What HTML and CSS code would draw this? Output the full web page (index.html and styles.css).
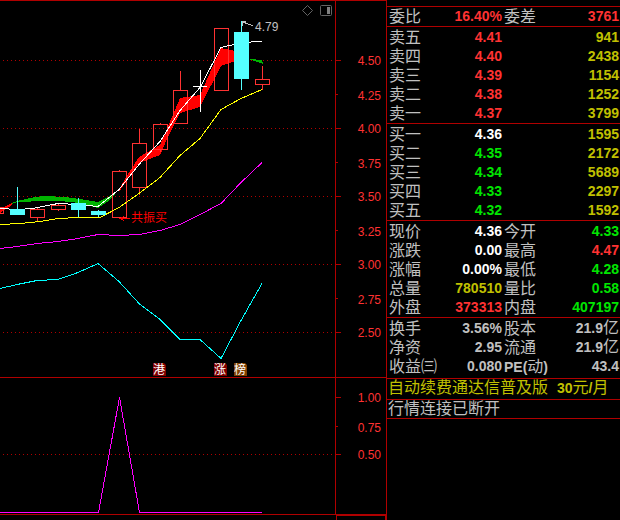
FILE: index.html
```
<!DOCTYPE html>
<html lang="zh-CN">
<head>
    <meta charset="UTF-8">
    <meta name="viewport" content="width=device-width, initial-scale=1.0">
    <title>行情</title>
    <link rel="stylesheet" href="styles.css">
</head>
<body>
    <main class="charts">
        <!-- K线 -->
        <svg class="chart main-chart" viewBox="0 0 386 377" role="img" aria-label="K线图">
            <g class="grid">
                <path d="M3 60.5H334M3 128.5H334M3 196.5H334M3 264.5H334M3 332.5H334"/>
            </g>
            <g class="axis">
                <path d="M335.5 0V377M336 60.5h5M336 94.5h2M336 128.5h5M336 162.5h2M336 196.5h5M336 230.5h2M336 264.5h5M336 298.5h2M336 332.5h5"/>
            </g>
            <g class="axis-text">
                <text x="381" y="65">4.50</text>
                <text x="381" y="100">4.25</text>
                <text x="381" y="133">4.00</text>
                <text x="381" y="168">3.75</text>
                <text x="381" y="201">3.50</text>
                <text x="381" y="236">3.25</text>
                <text x="381" y="269">3.00</text>
                <text x="381" y="304">2.75</text>
                <text x="381" y="337">2.50</text>
            </g>

            <g class="band">
                <path class="band-up" d="M0 208L6 206 12 203 12 205 6 209 0 213Z"/>
                <path class="band-down" d="M11 203L17 201 35 197 45 196 65 197 80 199 98 202 108 197 113 194 116 194 107 202 98 208 87 205 80 203 60 201 45 201 17 202 12 204Z"/>
                <path class="band-up" d="M119 189L130 171 139 157 160 145 180 98 200 95 221 48 235 51 241 53 241 59 235 61 221 66 200 107 180 113 167 139 160 155 139 163 119 192Z"/>
                <path class="band-down" d="M249 59L262 60 263 64 260 63Z"/>
            </g>

            <g class="up">
                <path d="M-4 207.5H3.5V213.5H-4"/>
                <path d="M30.5 209.5h14v8h-14zM37.5 208v1M37.5 218v3"/>
                <path d="M51.5 205.5h14v4h-14zM58.5 204v1M58.5 210v1"/>
                <path d="M112.5 171.5h14v46h-14zM119.5 170v1M119.5 218v1"/>
                <path d="M132.5 143.5h14v44h-14zM139.5 129v14M139.5 188v7"/>
                <path d="M153.5 124.5h14v25h-14zM160.5 123v1M160.5 150v2"/>
                <path d="M173.5 90.5h14v33h-14zM180.5 71v19"/>
                <path d="M214.5 28.5h14v62h-14z"/>
                <path d="M255.5 79.5h14v5h-14zM262.5 66v13M262.5 85v5"/>
            </g>

            <path class="line white" d="M0 208.500L17 209.500 33 208.500 58 203.500 78 204.500 98 206.500 119 189.500 139 164.500 160 141.500 180 110.500 200 87.500 221 47.500 229 45.500 241 43.500 254 41.500 262 41.500"/>
            <path class="line yellow" d="M0 224.500L20 223.500 40 221.500 58 218.500 78 217.500 100 217.500 119 207.500 139 193.500 160 177.500 180 155.500 200 138.500 221 109.500 241 98.500 262 89.500"/>
            <path class="line magenta" d="M0 248.500L17 246.500 37 243.500 58 241.500 78 238.500 98 234.500 119 235.500 139 234.500 160 230.500 180 224.500 200 214.500 221 203.500 241 182.500 262 162.500"/>
            <path class="line cyan" d="M0 288.500L17 284.500 37 280.500 58 279.500 78 272.500 98 263.500 119 281.500 139 303.500 160 319.500 180 339.500 200 339.500 221 358.500 241 320.500 262 283.500"/>

            <g class="down">
                <path d="M10 209h15v6H10zM17 187h1v22h-1z"/>
                <path d="M71 203h15v7H71zM78 198h1v19h-1z"/>
                <path d="M91 211h15v4H91zM98 210h1v7h-1z"/>
                <path d="M234 32h15v47H234zM241 21h1v69h-1z"/>
            </g>
            <path class="flat" d="M200.500 70V112M193 86.500H207"/>

            <path class="line pointer" d="M253 25.500L249 24.500 242 21.500M242 25.500V21.500H246"/>
            <text class="peak" x="255" y="31">4.79</text>
            <path class="line signal-line" d="M120 218.500H130M124 216.500L120 218.500 124 220.500"/>
            <text class="signal" x="131" y="222">共振买</text>

            <path class="badge-red" d="M153 363h11l2 2v11h-13z"/>
            <path class="badge-red" d="M214 363h11l2 2v11h-13z"/>
            <path class="badge-brown" d="M234 363h11l2 2v11h-13z"/>
            <g class="badge-text">
                <text x="153" y="374">港</text>
                <text x="214" y="374">涨</text>
                <text x="234" y="374">榜</text>
            </g>

            <g class="tools">
                <path d="M307.500 5.500L312.500 10.500 307.500 15.500 302.500 10.500Z"/>
                <rect x="320.500" y="5.500" width="11" height="10" rx="1"/>
                <path class="tools-fill" d="M327 7h3v7h-3z"/>
            </g>
        </svg>

        <!-- 副图 -->
        <svg class="chart sub-chart" viewBox="0 0 386 136" role="img" aria-label="指标图">
            <g class="grid">
                <path d="M3 76.500H334"/>
            </g>
            <g class="axis">
                <path d="M335.500 0V136M336 19.500h5M336 48.500h2M336 76.500h5"/>
            </g>
            <g class="axis-text">
                <text x="381" y="24">1.00</text>
                <text x="381" y="54">0.75</text>
                <text x="381" y="81">0.50</text>
            </g>
            <path class="line magenta" d="M0 134.500H98.500L119.500 19.500 139.500 134.500H262"/>
        </svg>
        <div class="footer"><div class="footer-box"></div></div>
    </main>

    <aside class="quote">
        <header class="stock-name"><span>0 神开股份</span></header>
        <table>
            <colgroup><col class="c-label"><col class="c-value"><col class="c-label2"><col></colgroup>
            <tr><th>委比</th><td class="red">16.40%</td><th>委差</th><td class="red">3761</td></tr>
        </table>
        <table class="block">
            <colgroup><col class="c-label"><col class="c-value"><col></colgroup>
            <tr><th>卖五</th><td class="red">4.41</td><td class="olive">941</td></tr>
            <tr><th>卖四</th><td class="red">4.40</td><td class="olive">2438</td></tr>
            <tr><th>卖三</th><td class="red">4.39</td><td class="olive">1154</td></tr>
            <tr><th>卖二</th><td class="red">4.38</td><td class="olive">1252</td></tr>
            <tr><th>卖一</th><td class="red">4.37</td><td class="olive">3799</td></tr>
        </table>
        <table class="block">
            <colgroup><col class="c-label"><col class="c-value"><col></colgroup>
            <tr><th>买一</th><td class="bright">4.36</td><td class="olive">1595</td></tr>
            <tr><th>买二</th><td class="green">4.35</td><td class="olive">2172</td></tr>
            <tr><th>买三</th><td class="green">4.34</td><td class="olive">5689</td></tr>
            <tr><th>买四</th><td class="green">4.33</td><td class="olive">2297</td></tr>
            <tr><th>买五</th><td class="green">4.32</td><td class="olive">1592</td></tr>
        </table>
        <table class="block">
            <colgroup><col class="c-label"><col class="c-value"><col class="c-label2"><col></colgroup>
            <tr><th>现价</th><td class="bright">4.36</td><th>今开</th><td class="green">4.33</td></tr>
            <tr><th>涨跌</th><td class="bright">0.00</td><th>最高</th><td class="red">4.47</td></tr>
            <tr><th>涨幅</th><td class="bright">0.00%</td><th>最低</th><td class="green">4.28</td></tr>
            <tr><th>总量</th><td class="olive">780510</td><th>量比</th><td class="green">0.58</td></tr>
            <tr><th>外盘</th><td class="red">373313</td><th>内盘</th><td class="green">407197</td></tr>
        </table>
        <table class="block finance">
            <colgroup><col class="c-label"><col class="c-value"><col class="c-label2"><col></colgroup>
            <tr><th>换手</th><td>3.56%</td><th>股本</th><td>21.9<span class="unit">亿</span></td></tr>
            <tr><th>净资</th><td>2.95</td><th>流通</th><td>21.9<span class="unit">亿</span></td></tr>
            <tr><th>收益㈢</th><td>0.080</td><th><b>PE(</b>动<b>)</b></th><td>43.4</td></tr>
        </table>
        <p class="notice promo">自动续费通达信普及版&nbsp; <b>30</b>元<b>/</b>月</p>
        <p class="notice status">行情连接已断开</p>
    </aside>
</body>
</html>
```
FILE: styles.css
```
* {
    box-sizing: border-box;
}

body {
    display: flex;
    align-items: stretch;
    margin: 0;
    min-height: 100vh;
    background-color: #000;
    color: #c0c0c0;
    font-family: "Liberation Sans", "Noto Sans CJK SC", sans-serif;
    overflow: hidden;
}

/* 左侧图表 */
.charts {
    flex: 1;
    display: flex;
    flex-direction: column;
    min-width: 0;
    border-top: 1px solid #b00000;
}

.chart {
    display: block;
    width: 100%;
}

.main-chart {
    margin-top: -1px;
    border-bottom: 1px solid #b00000;
}

.sub-chart {
    border-bottom: 1px solid #b00000;
}

.grid path,
.axis path,
.up path,
.line,
.flat {
    fill: none;
    stroke-width: 1;
    shape-rendering: crispEdges;
}

.grid path {
    stroke: #b00000;
    stroke-dasharray: 1 3;
}

.axis path {
    stroke: #b00000;
}

.axis-text {
    fill: #ff3232;
    font-size: 12px;
    text-anchor: end;
}

.band,
.down {
    shape-rendering: crispEdges;
}

.band-up {
    fill: #ff0000;
}

.band-down {
    fill: #00b400;
}

.up path {
    stroke: #ff3232;
}

.down {
    fill: #54ffff;
}

.flat,
.white {
    stroke: #ffffff;
}

.yellow {
    stroke: #ffff00;
}

.magenta {
    stroke: #ff00ff;
}

.cyan {
    stroke: #00ffff;
}

.pointer {
    stroke: #c0c0c0;
}

.peak {
    fill: #c0c0c0;
    font-size: 12px;
}

.signal-line {
    stroke: #ff0000;
}

.signal {
    fill: #ff0000;
    font-size: 12px;
}

.badge-red {
    fill: #800000;
}

.badge-brown {
    fill: #804000;
}

.badge-text {
    fill: #ffffff;
    font-size: 12px;
}

.tools {
    fill: none;
    stroke: #646464;
}

.tools .tools-fill {
    fill: #808080;
    stroke: none;
}

.footer {
    flex: 1;
    display: flex;
    justify-content: flex-end;
}

.footer-box {
    width: 13%;
    border: 1px solid #b00000;
    border-width: 1px 1px 0 1px;
}

/* 右侧报价 */
.quote {
    width: 234px;
    border-left: 1px solid #b00000;
    font-size: 14px;
}

.stock-name {
    display: flex;
    align-items: flex-end;
    justify-content: center;
    height: 6px;
    overflow: hidden;
    color: #ffff00;
    font-size: 16px;
    line-height: 20px;
}

.stock-name span {
    padding-bottom: 3px;
}

table {
    width: 100%;
    table-layout: fixed;
    border-spacing: 0;
    border-top: 1px solid #b00000;
}

.block {
    padding-top: 1px;
}

.finance {
    padding-bottom: 2px;
}

.c-label {
    width: 52px;
}

.c-value {
    width: 63px;
}

.c-label2 {
    width: 48px;
}

th,
td {
    height: 19px;
    padding: 0;
    line-height: 19px;
    white-space: nowrap;
}

th {
    padding-left: 2px;
    text-align: left;
    font-size: 16px;
    font-weight: normal;
}

b,
.unit {
    line-height: 1px;
}

th b {
    font-size: 14px;
}

td {
    text-align: right;
    font-weight: bold;
}

td:last-child {
    padding-right: 1px;
}

.unit {
    font-size: 16px;
    font-weight: normal;
}

.red {
    color: #ff3232;
}

.green {
    color: #00e600;
}

.olive {
    color: #c0c000;
}

.bright {
    color: #ffffff;
}

.notice {
    margin: 0;
    padding-left: 1px;
    border-top: 1px solid #b00000;
    font-size: 16px;
    line-height: 18px;
    white-space: nowrap;
}

.promo {
    padding-bottom: 2px;
    color: #c0c000;
}

.promo b {
    font-size: 14px;
}

.status {
    border-bottom: 1px solid #b00000;
}
```
